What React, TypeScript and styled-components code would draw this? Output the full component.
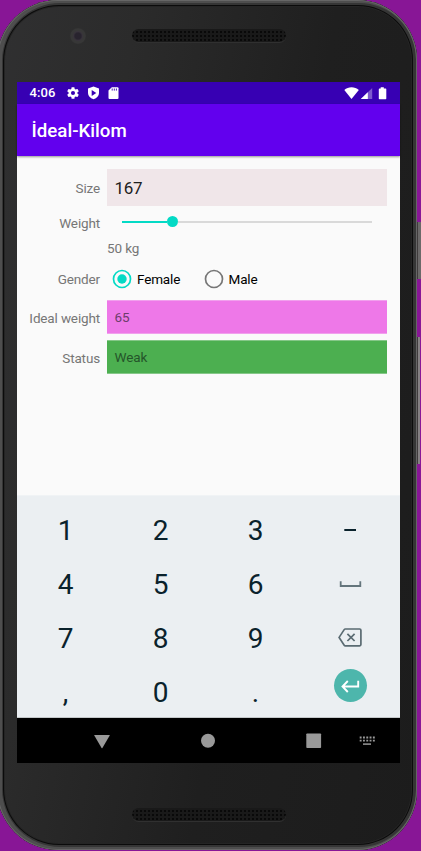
import React from 'react';
import styled, { createGlobalStyle } from 'styled-components';

const GlobalStyle = createGlobalStyle`
  * { box-sizing: border-box; }
  html, body { margin: 0; padding: 0; }
  body { overflow: hidden; background: #881696; font-family: Roboto, "Liberation Sans", sans-serif; }
`;

const Stage = styled.main`
  position: relative;
  width: 421px;
  height: 851px;
  overflow: hidden;
  background: #881696;
`;

const SideButton = styled.div<{ $top: number; $height: number; $color: string }>`
  position: absolute;
  left: 417px;
  top: ${(p) => p.$top}px;
  width: 4px;
  height: ${(p) => p.$height}px;
  background: ${(p) => p.$color};
`;

const Phone = styled.div`
  position: relative;
  display: flex;
  flex-direction: column;
  width: 420px;
  height: 850px;
  margin-left: -3px;
  padding: 0 17px 0 20px;
  border-radius: 61px 60px 60px 61px;
  background: linear-gradient(100deg, #303031 0%, #2b2b2b 25%, #1f1f1f 60%, #1c1c1c 100%);
  box-shadow:
    inset 0 0 0 1px #666,
    inset 2px 0 0 3px #4e4e4e,
    inset 1px 0 0 5px #353535,
    inset 1px 0 0 6px #0b0b0b,
    inset 1px 0 0 7px #242424;
`;

const TopBezel = styled.div`
  position: relative;
  flex: 0 0 82px;
  padding: 29px 0 0 115px;
`;

const BottomBezel = styled.div`
  flex: 0 0 87px;
  padding: 45px 0 0 115px;
`;

const Speaker = styled.div`
  width: 154px;
  height: 13px;
  padding: 1px 4px;
  border-radius: 7px;
  background: radial-gradient(circle at 2px 2px, #090909 0.8px, transparent 1.3px) 3px 1px / 4px 4px, #191919;
  box-shadow: 0 1px 0 #303030;
`;

const Camera = styled.div`
  position: absolute;
  left: 53px;
  top: 28px;
  width: 16px;
  height: 16px;
  border-radius: 50%;
  background: radial-gradient(circle, #28232e 0 3px, #38333b 4.5px, #373737 5.5px 7px, #323232 8px);
`;

const Screen = styled.section`
  display: flex;
  flex-direction: column;
  width: 383px;
  height: 681px;
  background: #fafafa;
`;

const StatusBar = styled.div`
  display: flex;
  align-items: center;
  flex: 0 0 22px;
  padding: 0 13px 0 12.5px;
  color: #fff;
  background: #3700b3;
`;

const Clock = styled.span`
  width: 36px;
  font-size: 13px;
  font-weight: 500;
  line-height: 22px;
  letter-spacing: 0.1px;
`;

const StatusIcons = styled.div`
  display: flex;
  flex: 1;
  align-items: center;
  gap: 7px;
`;

const Signals = styled.div`
  display: flex;
  align-items: center;
`;

const AppBar = styled.header`
  position: relative;
  flex: 0 0 52px;
  min-height: 0;
  padding-left: 14.5px;
  color: #fff;
  background: #6200ee;
  box-shadow: 0 1px 2px rgba(0, 0, 0, 0.4);
  font-size: 18.7px;
  font-weight: 500;
  line-height: 55px;
`;

const Form = styled.div`
  display: grid;
  grid-template-columns: 83px 280px;
  grid-template-rows: 38px 28px 25px 37px 37px 40px;
  column-gap: 7px;
  flex: 1;
  align-content: start;
  padding-top: 13px;
`;

const Label = styled.label<{ $shift?: number }>`
  align-self: center;
  padding-top: ${(p) => p.$shift ?? 0}px;
  color: #767676;
  font-size: 13.5px;
  letter-spacing: -0.15px;
  line-height: 18px;
  text-align: right;
  white-space: nowrap;
`;

const SizeField = styled.div`
  height: 37px;
  padding-left: 7.5px;
  color: #202020;
  background: #f0e6e9;
  font-size: 17px;
  letter-spacing: -0.3px;
  line-height: 39px;
`;

const ResultField = styled.div<{ $bg: string; $edge: string; $color: string }>`
  align-self: end;
  height: 34px;
  padding-left: 7.5px;
  border: solid ${(p) => p.$edge};
  border-width: 1px 0;
  color: ${(p) => p.$color};
  background: ${(p) => p.$bg};
  font-size: 13.5px;
  letter-spacing: -0.1px;
  line-height: 33px;
`;

const Slider = styled.div`
  display: flex;
  align-items: center;
  height: 29px;
  padding: 0 15px;
`;

const TrackDone = styled.div`
  width: 45px;
  height: 2px;
  background: #03dac5;
`;

const Thumb = styled.div`
  width: 11px;
  height: 11px;
  border-radius: 50%;
  background: #03dac5;
`;

const TrackRest = styled.div`
  flex: 1;
  height: 2px;
  background: #d9d9d9;
`;

const WeightValue = styled.div`
  grid-column: 2;
  color: #767676;
  font-size: 13.5px;
  letter-spacing: -0.1px;
  line-height: 27px;
`;

const RadioGroup = styled.div`
  display: flex;
  align-items: center;
  padding: 0 0 0 5px;
`;

const Choice = styled.div<{ $width: number }>`
  display: flex;
  align-items: center;
  gap: 5px;
  width: ${(p) => p.$width}px;
  color: #000;
  font-size: 13.5px;
  letter-spacing: -0.15px;
  line-height: 20px;
`;

const Keyboard = styled.div`
  display: grid;
  grid-template-columns: repeat(4, 95px);
  grid-template-rows: repeat(4, 54px);
  flex: 0 0 223px;
  min-height: 0;
  padding: 8px 0 0 1px;
  background: #ebeff2;
  border-top: 1px solid #f0f3f5;
  border-bottom: 1px solid #c3c7c9;
`;

const Key = styled.div`
  display: flex;
  align-items: center;
  justify-content: center;
  color: #0a222c;
  font-size: 28px;
  line-height: 54px;
`;

const EnterKey = styled.div`
  display: flex;
  align-items: center;
  justify-content: center;
  width: 33px;
  height: 33px;
  margin-bottom: 15px;
  border-radius: 50%;
  background: #4db6ac;
`;

const NavBar = styled.nav`
  display: flex;
  align-items: center;
  flex: 0 0 45px;
  padding-left: 76px;
  background: #000;
`;

const Gear = () => (
  <svg width="14" height="14" viewBox="0 0 24 24" fill="#fff">
    <path d="M19.43 12.98c.04-.32.07-.64.07-.98s-.03-.66-.07-.98l2.11-1.65a.5.5 0 0 0 .12-.64l-2-3.46a.5.5 0 0 0-.61-.22l-2.49 1a7.3 7.3 0 0 0-1.69-.98l-.38-2.65A.49.49 0 0 0 14 2h-4a.49.49 0 0 0-.49.42l-.38 2.65c-.61.25-1.17.59-1.69.98l-2.49-1a.49.49 0 0 0-.61.22l-2 3.46a.49.49 0 0 0 .12.64l2.11 1.65a7.9 7.9 0 0 0 0 1.96l-2.11 1.65a.5.5 0 0 0-.12.64l2 3.46c.12.22.39.3.61.22l2.49-1c.52.4 1.08.73 1.69.98l.38 2.65c.03.24.24.42.49.42h4c.25 0 .46-.18.49-.42l.38-2.65a7.3 7.3 0 0 0 1.69-.98l2.49 1c.23.09.49 0 .61-.22l2-3.46a.5.5 0 0 0-.12-.64zM12 15.5a3.5 3.5 0 1 1 0-7 3.5 3.5 0 0 1 0 7z" />
  </svg>
);

const Shield = () => (
  <svg width="13" height="14" viewBox="0 0 13 14">
    <path d="M6.5.6 12 2.5v4.4c0 2.9-2.1 4.9-5.5 6.4C3.1 11.8 1 9.8 1 6.9V2.5z" fill="#fff" />
    <path d="M4.700 4v6L9.300 7z" fill="#3700b3" />
  </svg>
);

const SdCard = () => (
  <svg width="13" height="14" viewBox="0 0 13 14">
    <path d="M4.8 1.2H10.500a1 1 0 0 1 1 1V12a1 1 0 0 1-1 1h-8a1 1 0 0 1-1-1V4.500z" fill="#fff" />
    <path d="M5.2 2.500v2.100M7.300 2.500v2.100M9.400 2.500v2.100" stroke="#3700b3" strokeWidth="0.900" />
  </svg>
);

const StatusSignals = () => (
  <svg width="43" height="14" viewBox="0 0 43 14">
    <path d="M.3 3.900C4.300.2 10.800.2 14.800 3.900L7.500 12.900z" fill="#fff" />
    <path d="M16.800 13 28.200 2v11z" fill="#fff" opacity=".35" />
    <path d="M16.800 13 23.800 6.300V13z" fill="#fff" />
    <path d="M36.700 1.200h3.100v1.300h1.900q.6 0 .6.700v9.400q0 .7-.7.700h-6.100q-.7 0-.7-.7V3.200q0-.7.700-.7h1.200z" fill="#fff" />
  </svg>
);

const RadioIcon = ({ checked = false }: { checked?: boolean }) => (
  <svg width="20" height="20" viewBox="0 0 20 20" fill="none">
    <circle cx="10" cy="10" r="8.500" stroke={checked ? '#03dac5' : '#767676'} strokeWidth="1.700" />
    {checked && <circle cx="10" cy="10" r="4.700" fill="#03dac5" />}
  </svg>
);

const MinusIcon = () => (
  <svg width="24" height="24" viewBox="1 1 24 24"><path d="M6.300 12h11.700" stroke="#0a222c" strokeWidth="2" /></svg>
);

const SpaceIcon = () => (
  <svg width="24" height="24" viewBox="0.500 0 24 24" fill="none">
    <path d="M2.200 8.300v4.700h19.600V8.300" stroke="#64757c" strokeWidth="1.800" />
  </svg>
);

const BackspaceIcon = () => (
  <svg width="26" height="24" viewBox="0 -0.500 26 24" fill="none" stroke="#5a6b72" strokeWidth="1.700">
    <path d="M7.300 1.500H21.700q1.200 0 1.200 1.200v14.400q0 1.200-1.200 1.200H7.300q-.7 0-1.100-.6L1.100 9.900 6.200 2.100q.4-.6 1.100-.6z" />
    <path d="m9.400 6.300 7.200 7.200m0-7.200-7.200 7.200" />
  </svg>
);

const EnterIcon = () => (
  <svg width="21" height="14" viewBox="0 0 21 14" fill="none" stroke="#fff" strokeWidth="1.900">
    <path d="M18.200 1.800V7.500H3.200M7.800 2 2.500 7.500 7.800 13" />
  </svg>
);

const NavIcons = () => (
  <svg width="290" height="20" viewBox="0 0 290 20" fill="#999">
    <path d="M1.700 4h14.600q.7 0 .4.600L9.400 16.900q-.4.600-.8 0L1.300 4.600Q1 4 1.700 4z" />
    <circle cx="115" cy="9.700" r="7" />
    <rect x="213.300" y="2.500" width="14.800" height="14.500" rx=".8" />
    <path d="M266.700 6.500h15.300M266.700 9.700h15.300" stroke="#999" strokeWidth="1.800" strokeDasharray="1.900 1.400" />
    <path d="M270 13.100h8" stroke="#999" strokeWidth="1.500" />
  </svg>
);

const keys: React.ReactNode[] = [
  '1', '2', '3', <MinusIcon />,
  '4', '5', '6', <SpaceIcon />,
  '7', '8', '9', <BackspaceIcon />,
  ',', '0', '.', <EnterKey><EnterIcon /></EnterKey>,
];

export default function App() {
  return (
    <>
      <GlobalStyle />
      <Stage>
        <SideButton $top={222} $height={57} $color="linear-gradient(90deg, #3f3b3c 1px, #6b6969 1px)" />
        <SideButton $top={337} $height={127} $color="linear-gradient(90deg, #3f3b3c 1px, #858183 1px 3px, #881696 3px)" />
        <Phone>
          <TopBezel><Camera /><Speaker /></TopBezel>
          <Screen>
            <StatusBar>
              <Clock>4:06</Clock>
              <StatusIcons><Gear /><Shield /><SdCard /></StatusIcons>
              <Signals><StatusSignals /></Signals>
            </StatusBar>
            <AppBar>İdeal-Kilom</AppBar>
            <Form>
              <Label>Size</Label>
              <SizeField>167</SizeField>
              <Label $shift={4}>Weight</Label>
              <Slider><TrackDone /><Thumb /><TrackRest /></Slider>
              <WeightValue>50 kg</WeightValue>
              <Label $shift={1}>Gender</Label>
              <RadioGroup>
                <Choice $width={91.5}><RadioIcon checked />Female</Choice>
                <Choice $width={80}><RadioIcon />Male</Choice>
              </RadioGroup>
              <Label $shift={4}>Ideal weight</Label>
              <ResultField $bg="#ee78e8" $edge="#f1a0ed" $color="#6c3d6b">65</ResultField>
              <Label $shift={7}>Status</Label>
              <ResultField $bg="#4caf50" $edge="#85c788" $color="#25552a">Weak</ResultField>
            </Form>
            <Keyboard>
              {keys.map((key, index) => <Key key={index}>{key}</Key>)}
            </Keyboard>
            <NavBar><NavIcons /></NavBar>
          </Screen>
          <BottomBezel><Speaker /></BottomBezel>
        </Phone>
      </Stage>
    </>
  );
}
